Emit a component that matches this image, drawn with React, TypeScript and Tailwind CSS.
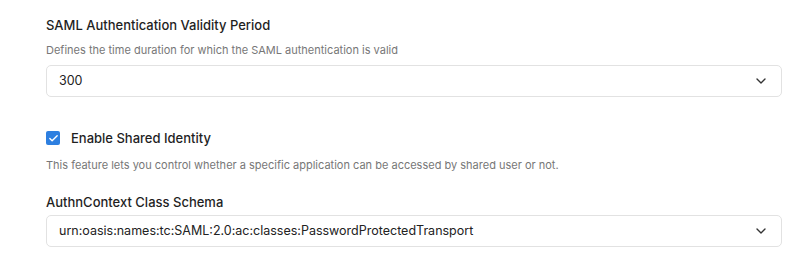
import { ChevronDown, Check } from 'lucide-react';

function Select({ value }: { value: string }) {
  return (
    <div className="flex h-[32px] items-center justify-between rounded-[5px] border border-[#e2e2e2] bg-white pl-[12px] pr-[12px]">
      <span className="text-[12.5px] text-[#222]">{value}</span>
      <ChevronDown className="h-4 w-4 text-[#333]" strokeWidth={2} />
    </div>
  );
}

export default function App() {
  return (
    <div
      className="min-h-screen w-[810px] bg-white px-[46px] pr-[28px]"
      style={{ fontFamily: 'Inter, "Noto Sans", sans-serif' }}
    >
      <div className="pt-[15px]">
        <div className="text-[13px] font-medium leading-[20px] text-[#1f1f1f]">
          SAML Authentication Validity Period
        </div>
        <div className="mt-[8px] text-[11px] leading-[14px] text-[#777]">
          Defines the time duration for which the SAML authentication is valid
        </div>
        <div className="mt-[8px]">
          <Select value="300" />
        </div>
      </div>

      <div className="mt-[33px] flex items-center gap-[11px]">
        <div className="flex h-[14px] w-[14px] items-center justify-center rounded-[2px] bg-[#2d7fe0]">
          <Check className="h-[11px] w-[11px] text-white" strokeWidth={3} />
        </div>
        <span className="text-[13px] font-medium leading-[16px] text-[#1f1f1f]">
          Enable Shared Identity
        </span>
      </div>
      <div className="mt-[12px] text-[11px] leading-[14px] text-[#777]">
        This feature lets you control whether a specific application can be accessed by shared user or not.
      </div>

      <div className="mt-[21px] text-[13px] font-medium leading-[18px] text-[#1f1f1f]">
        AuthnContext Class Schema
      </div>
      <div className="mt-[4px]">
        <Select value="urn:oasis:names:tc:SAML:2.0:ac:classes:PasswordProtectedTransport" />
      </div>
    </div>
  );
}
